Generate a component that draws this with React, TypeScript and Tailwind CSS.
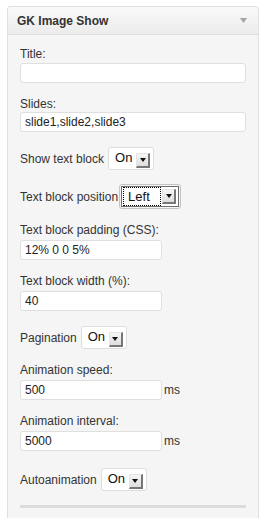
import React from 'react';

const font = { fontFamily: '"Liberation Sans", Arial, sans-serif' };

const DropButton: React.FC = () => (
  <span className="flex h-[15px] w-[14px] shrink-0 items-center justify-center border-t border-l border-r-2 border-b-2 border-t-[#e4e4e4] border-l-[#e4e4e4] border-r-[#777] border-b-[#777] bg-gradient-to-b from-[#f6f6f6] to-[#dedede]">
    <svg width="6" height="4" viewBox="0 0 6 4">
      <path d="M0 0h6L3 4z" fill="#111" />
    </svg>
  </span>
);

const Select: React.FC<{ value: string }> = ({ value }) => (
  <div className="ml-[4px] flex h-[23px] w-[46px] items-end justify-between rounded-[3px] border border-[#dedede] bg-white pb-px pl-[6px] pr-[3px]">
    <span className="self-start pt-[2px] text-[13px] leading-[15px] text-[#111]">{value}</span>
    <DropButton />
  </div>
);

const FocusedSelect: React.FC<{ value: string }> = ({ value }) => (
  <div className="ml-px rounded-[3px] border border-[#c4c4c4] p-px">
    <div className="flex h-[21px] items-center gap-px border border-[#6e6e6e] bg-white pl-px pr-[2px]">
      <span className="flex h-[19px] w-[38px] items-center border border-dotted border-black pl-[4px] text-[13px] text-[#111]">{value}</span>
      <DropButton />
    </div>
  </div>
);

const TextField: React.FC<{ label: string; value?: string; short?: boolean; unit?: string; gap?: string; className?: string }> = ({ label, value = '', short, unit, gap = 'mt-[2px]', className = '' }) => (
  <div className={className}>
    <div className="h-4 text-[12px] leading-4 text-[#333]">{label}</div>
    <div className={`flex items-center ${gap}`}>
      <div className={`flex h-[20px] items-center rounded-[3px] border border-[#dfdfdf] bg-white px-[4px] text-[12px] text-[#222] ${short ? 'w-[142px]' : 'w-[226px]'}`}>{value}</div>
      {unit && <span className="ml-[2px] text-[12px] text-[#333]">{unit}</span>}
    </div>
  </div>
);

const SelectRow: React.FC<{ label: string; className?: string; children: React.ReactNode }> = ({ label, className = '', children }) => (
  <div className={`flex items-center ${className}`}>
    <span className="text-[12px] leading-4 text-[#333]">{label}</span>
    {children}
  </div>
);

export default function App() {
  return (
    <div className="h-[518px] overflow-hidden bg-white pl-[7px] pt-[6px]" style={font}>
      <div className="h-[600px] w-[252px] rounded-t-[3px] border border-[#dfdfdf] bg-[#f5f5f5]">
        {/* Widget title bar */}
        <div className="flex h-[28px] items-center justify-between rounded-t-[3px] border-b border-[#dfdfdf] bg-gradient-to-b from-[#f9f9f9] to-[#ececec] pl-[9px] pr-[11px]">
          <span className="text-[12px] font-bold text-[#333]">GK Image Show</span>
          <svg width="7" height="5" viewBox="0 0 7 5">
            <path d="M0 0h7L3.5 5z" fill="#a5a5a5" />
          </svg>
        </div>

        <div className="px-[12px] pt-[11px]">
          <TextField label="Title:" gap="mt-px" />
          <TextField label="Slides:" value="slide1,slide2,slide3" gap="mt-0" className="mt-[13px]" />

          <SelectRow label="Show text block" className="mt-[15px]">
            <Select value="On" />
          </SelectRow>

          <SelectRow label="Text block position" className="mt-[14px]">
            <FocusedSelect value="Left" />
          </SelectRow>

          <TextField label="Text block padding (CSS):" value="12% 0 0 5%" short className="mt-[13px]" />
          <TextField label="Text block width (%):" value="40" short className="mt-[13px]" />

          <SelectRow label="Pagination" className="mt-[15px]">
            <Select value="On" />
          </SelectRow>

          <TextField label="Animation speed:" value="500" short unit="ms" className="mt-[13px]" />
          <TextField label="Animation interval:" value="5000" short unit="ms" className="mt-[13px]" />

          <SelectRow label="Autoanimation" className="mt-[17px]">
            <Select value="On" />
          </SelectRow>

          <div className="mt-[14px] h-[3px] w-[226px] bg-[#dcdcdc]" />
        </div>
      </div>
    </div>
  );
}
